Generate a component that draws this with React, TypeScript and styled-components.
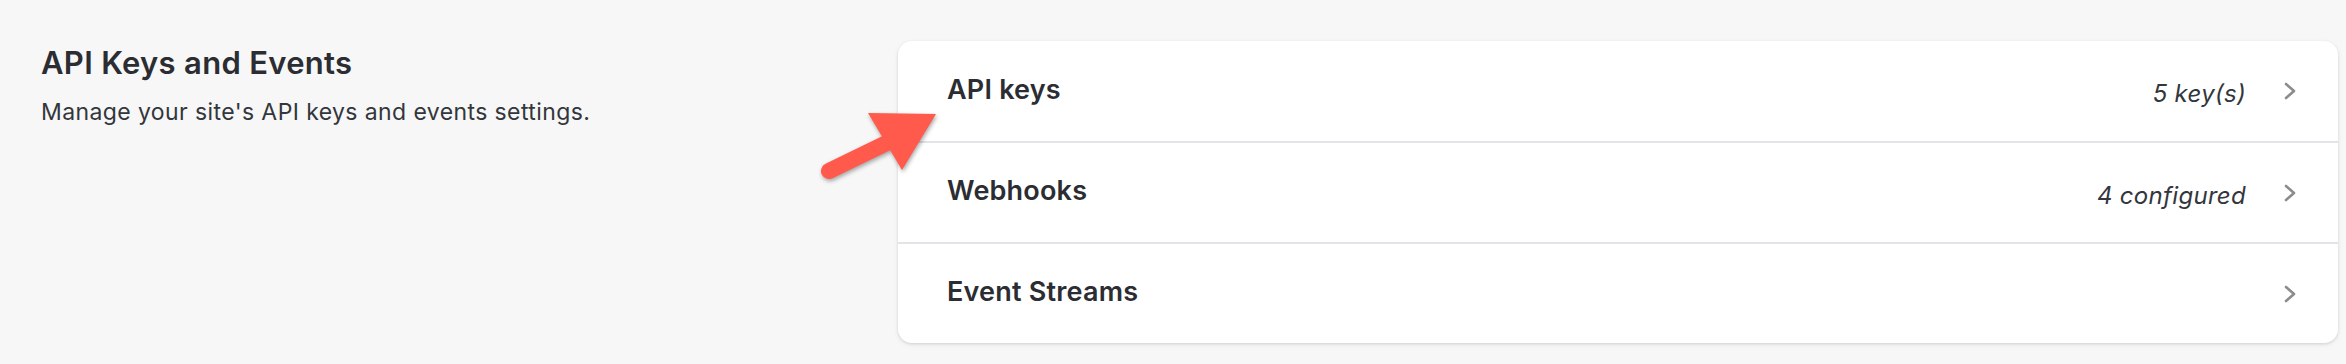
import React from 'react';
import styled, { createGlobalStyle } from 'styled-components';

const GlobalStyle = createGlobalStyle`
  html, body {
    margin: 0;
    padding: 0;
    background: #f7f7f7;
  }
  body {
    font-family: Inter, "Noto Sans", "Liberation Sans", sans-serif;
    color: #2b2d33;
    -webkit-font-smoothing: antialiased;
  }
`;

const Page = styled.section`
  position: relative;
  display: flex;
  align-items: flex-start;
  padding: 41px 8px 20px 41px;
  height: 364px;
  box-sizing: border-box;
  background: #f7f7f7;
`;

const Intro = styled.div`
  width: 857px;
  flex-shrink: 0;
`;

const Title = styled.h2`
  margin: 0;
  font-size: 31px;
  line-height: 44px;
  font-weight: 600;
  letter-spacing: 0.3px;
  color: #2b2d33;
`;

const Subtitle = styled.p`
  margin: 11px 0 0;
  font-size: 23px;
  line-height: 32px;
  font-weight: 400;
  letter-spacing: 0.4px;
  color: #33363c;
`;

const Card = styled.div`
  flex: 1;
  background: #fff;
  border-radius: 14px;
  box-shadow: 0 1px 3px rgba(0, 0, 0, 0.12), 0 2px 6px rgba(0, 0, 0, 0.05);
  overflow: hidden;
`;

const Row = styled.div`
  display: flex;
  align-items: center;
  height: 101px;
  padding: 0 40px 0 49px;
  box-sizing: border-box;
  border-top: 2px solid #e3e3e8;

  &:first-child {
    border-top: none;
    height: 100px;
  }
`;

const Label = styled.span`
  flex: 1;
  font-size: 27px;
  font-weight: 600;
  letter-spacing: 0.2px;
  color: #2b2d33;
  margin-top: -4px;
`;

const Meta = styled.span`
  font-size: 24px;
  font-style: italic;
  letter-spacing: 0.3px;
  color: #33363c;
  margin: 5px 38px 0 0;
`;

const Chevron = styled.svg`
  width: 14px;
  height: 18px;
  flex-shrink: 0;
`;

const Pointer = styled.svg`
  position: absolute;
  left: 815px;
  top: 105px;
  width: 130px;
  height: 80px;
  overflow: visible;
  filter: drop-shadow(1px 2px 2px rgba(0, 0, 0, 0.35));
`;

const rows = [
  { label: 'API keys', meta: '5 key(s)' },
  { label: 'Webhooks', meta: '4 configured' },
  { label: 'Event Streams', meta: '' },
];

const App = () => {
  return (
    <>
      <GlobalStyle />
      <Page>
        <Intro>
          <Title>API Keys and Events</Title>
          <Subtitle>Manage your site's API keys and events settings.</Subtitle>
        </Intro>
        <Card>
          {rows.map((row) => (
            <Row key={row.label}>
              <Label>{row.label}</Label>
              {row.meta && <Meta>{row.meta}</Meta>}
              <Chevron viewBox="0 0 14 18">
                <polyline
                  points="2,2 10,9 2,16"
                  fill="none"
                  stroke="#8c8c8f"
                  strokeWidth="2.6"
                  strokeLinecap="round"
                  strokeLinejoin="round"
                />
              </Chevron>
            </Row>
          ))}
        </Card>
        <Pointer viewBox="0 0 130 80">
          <line x1="14" y1="66" x2="86" y2="31" stroke="#ff5a4b" strokeWidth="16" strokeLinecap="round" />
          <polygon points="53,8 121,9 87,65" fill="#ff5a4b" />
        </Pointer>
      </Page>
    </>
  );
};

export default App;
